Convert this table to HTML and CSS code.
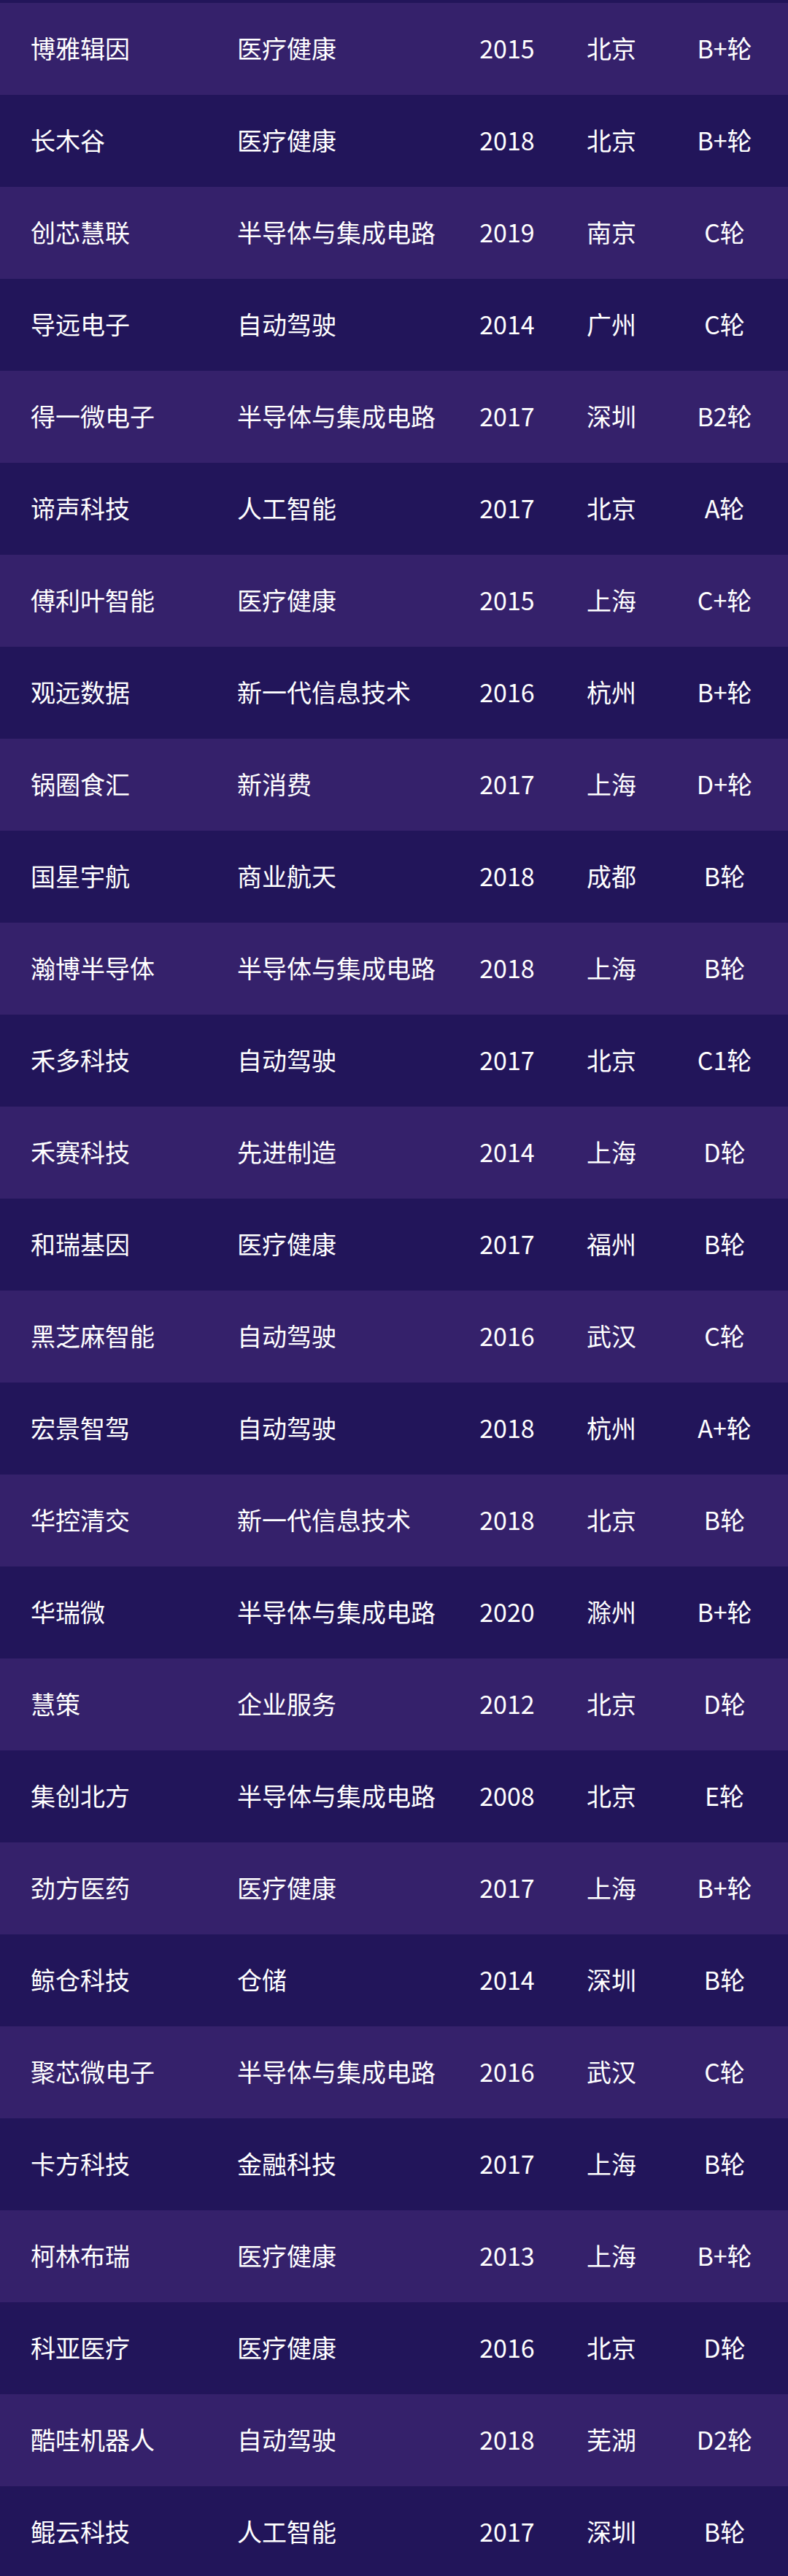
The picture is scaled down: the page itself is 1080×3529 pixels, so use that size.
FILE: index.html
```html
<!DOCTYPE html>
<html lang="zh-CN">
<head>
<meta charset="utf-8">
<title>企业列表</title>
<link rel="stylesheet" href="styles.css">
</head>
<body>
<div class="table">
  <div class="row odd"><span class="c name">博雅辑因</span><span class="c field">医疗健康</span><span class="c year">2015</span><span class="c city">北京</span><span class="c round">B+轮</span></div>
  <div class="row even"><span class="c name">长木谷</span><span class="c field">医疗健康</span><span class="c year">2018</span><span class="c city">北京</span><span class="c round">B+轮</span></div>
  <div class="row odd"><span class="c name">创芯慧联</span><span class="c field">半导体与集成电路</span><span class="c year">2019</span><span class="c city">南京</span><span class="c round">C轮</span></div>
  <div class="row even"><span class="c name">导远电子</span><span class="c field">自动驾驶</span><span class="c year">2014</span><span class="c city">广州</span><span class="c round">C轮</span></div>
  <div class="row odd"><span class="c name">得一微电子</span><span class="c field">半导体与集成电路</span><span class="c year">2017</span><span class="c city">深圳</span><span class="c round">B2轮</span></div>
  <div class="row even"><span class="c name">谛声科技</span><span class="c field">人工智能</span><span class="c year">2017</span><span class="c city">北京</span><span class="c round">A轮</span></div>
  <div class="row odd"><span class="c name">傅利叶智能</span><span class="c field">医疗健康</span><span class="c year">2015</span><span class="c city">上海</span><span class="c round">C+轮</span></div>
  <div class="row even"><span class="c name">观远数据</span><span class="c field">新一代信息技术</span><span class="c year">2016</span><span class="c city">杭州</span><span class="c round">B+轮</span></div>
  <div class="row odd"><span class="c name">锅圈食汇</span><span class="c field">新消费</span><span class="c year">2017</span><span class="c city">上海</span><span class="c round">D+轮</span></div>
  <div class="row even"><span class="c name">国星宇航</span><span class="c field">商业航天</span><span class="c year">2018</span><span class="c city">成都</span><span class="c round">B轮</span></div>
  <div class="row odd"><span class="c name">瀚博半导体</span><span class="c field">半导体与集成电路</span><span class="c year">2018</span><span class="c city">上海</span><span class="c round">B轮</span></div>
  <div class="row even"><span class="c name">禾多科技</span><span class="c field">自动驾驶</span><span class="c year">2017</span><span class="c city">北京</span><span class="c round">C1轮</span></div>
  <div class="row odd"><span class="c name">禾赛科技</span><span class="c field">先进制造</span><span class="c year">2014</span><span class="c city">上海</span><span class="c round">D轮</span></div>
  <div class="row even"><span class="c name">和瑞基因</span><span class="c field">医疗健康</span><span class="c year">2017</span><span class="c city">福州</span><span class="c round">B轮</span></div>
  <div class="row odd"><span class="c name">黑芝麻智能</span><span class="c field">自动驾驶</span><span class="c year">2016</span><span class="c city">武汉</span><span class="c round">C轮</span></div>
  <div class="row even"><span class="c name">宏景智驾</span><span class="c field">自动驾驶</span><span class="c year">2018</span><span class="c city">杭州</span><span class="c round">A+轮</span></div>
  <div class="row odd"><span class="c name">华控清交</span><span class="c field">新一代信息技术</span><span class="c year">2018</span><span class="c city">北京</span><span class="c round">B轮</span></div>
  <div class="row even"><span class="c name">华瑞微</span><span class="c field">半导体与集成电路</span><span class="c year">2020</span><span class="c city">滁州</span><span class="c round">B+轮</span></div>
  <div class="row odd"><span class="c name">慧策</span><span class="c field">企业服务</span><span class="c year">2012</span><span class="c city">北京</span><span class="c round">D轮</span></div>
  <div class="row even"><span class="c name">集创北方</span><span class="c field">半导体与集成电路</span><span class="c year">2008</span><span class="c city">北京</span><span class="c round">E轮</span></div>
  <div class="row odd"><span class="c name">劲方医药</span><span class="c field">医疗健康</span><span class="c year">2017</span><span class="c city">上海</span><span class="c round">B+轮</span></div>
  <div class="row even"><span class="c name">鲸仓科技</span><span class="c field">仓储</span><span class="c year">2014</span><span class="c city">深圳</span><span class="c round">B轮</span></div>
  <div class="row odd"><span class="c name">聚芯微电子</span><span class="c field">半导体与集成电路</span><span class="c year">2016</span><span class="c city">武汉</span><span class="c round">C轮</span></div>
  <div class="row even"><span class="c name">卡方科技</span><span class="c field">金融科技</span><span class="c year">2017</span><span class="c city">上海</span><span class="c round">B轮</span></div>
  <div class="row odd"><span class="c name">柯林布瑞</span><span class="c field">医疗健康</span><span class="c year">2013</span><span class="c city">上海</span><span class="c round">B+轮</span></div>
  <div class="row even"><span class="c name">科亚医疗</span><span class="c field">医疗健康</span><span class="c year">2016</span><span class="c city">北京</span><span class="c round">D轮</span></div>
  <div class="row odd"><span class="c name">酷哇机器人</span><span class="c field">自动驾驶</span><span class="c year">2018</span><span class="c city">芜湖</span><span class="c round">D2轮</span></div>
  <div class="row even"><span class="c name">鲲云科技</span><span class="c field">人工智能</span><span class="c year">2017</span><span class="c city">深圳</span><span class="c round">B轮</span></div>
</div>
</body>
</html>
```
FILE: styles.css
```css
html, body {
  margin: 0;
  padding: 0;
  background: #22155a;
}
body {
  font-family: "Noto Sans CJK SC", "Noto Sans", sans-serif;
  color: #ffffff;
}
.table {
  padding-top: 4px;
  display: flex;
  flex-direction: column;
}
.row {
  box-sizing: border-box;
  height: 126px;
  padding-bottom: 3px;
  display: flex;
  align-items: center;
  font-size: 34px;
  line-height: 1;
  font-weight: 400;
}
.row.odd {
  background: #35216b;
}
.row.even {
  background: #22155a;
}
.c {
  display: block;
  white-space: nowrap;
}
.name {
  margin-left: 42px;
  width: 283px;
}
.field {
  width: 315px;
}
.year {
  width: 110px;
  text-align: center;
}
.city {
  width: 176px;
  text-align: center;
}
.round {
  width: 134px;
  text-align: center;
}
```
